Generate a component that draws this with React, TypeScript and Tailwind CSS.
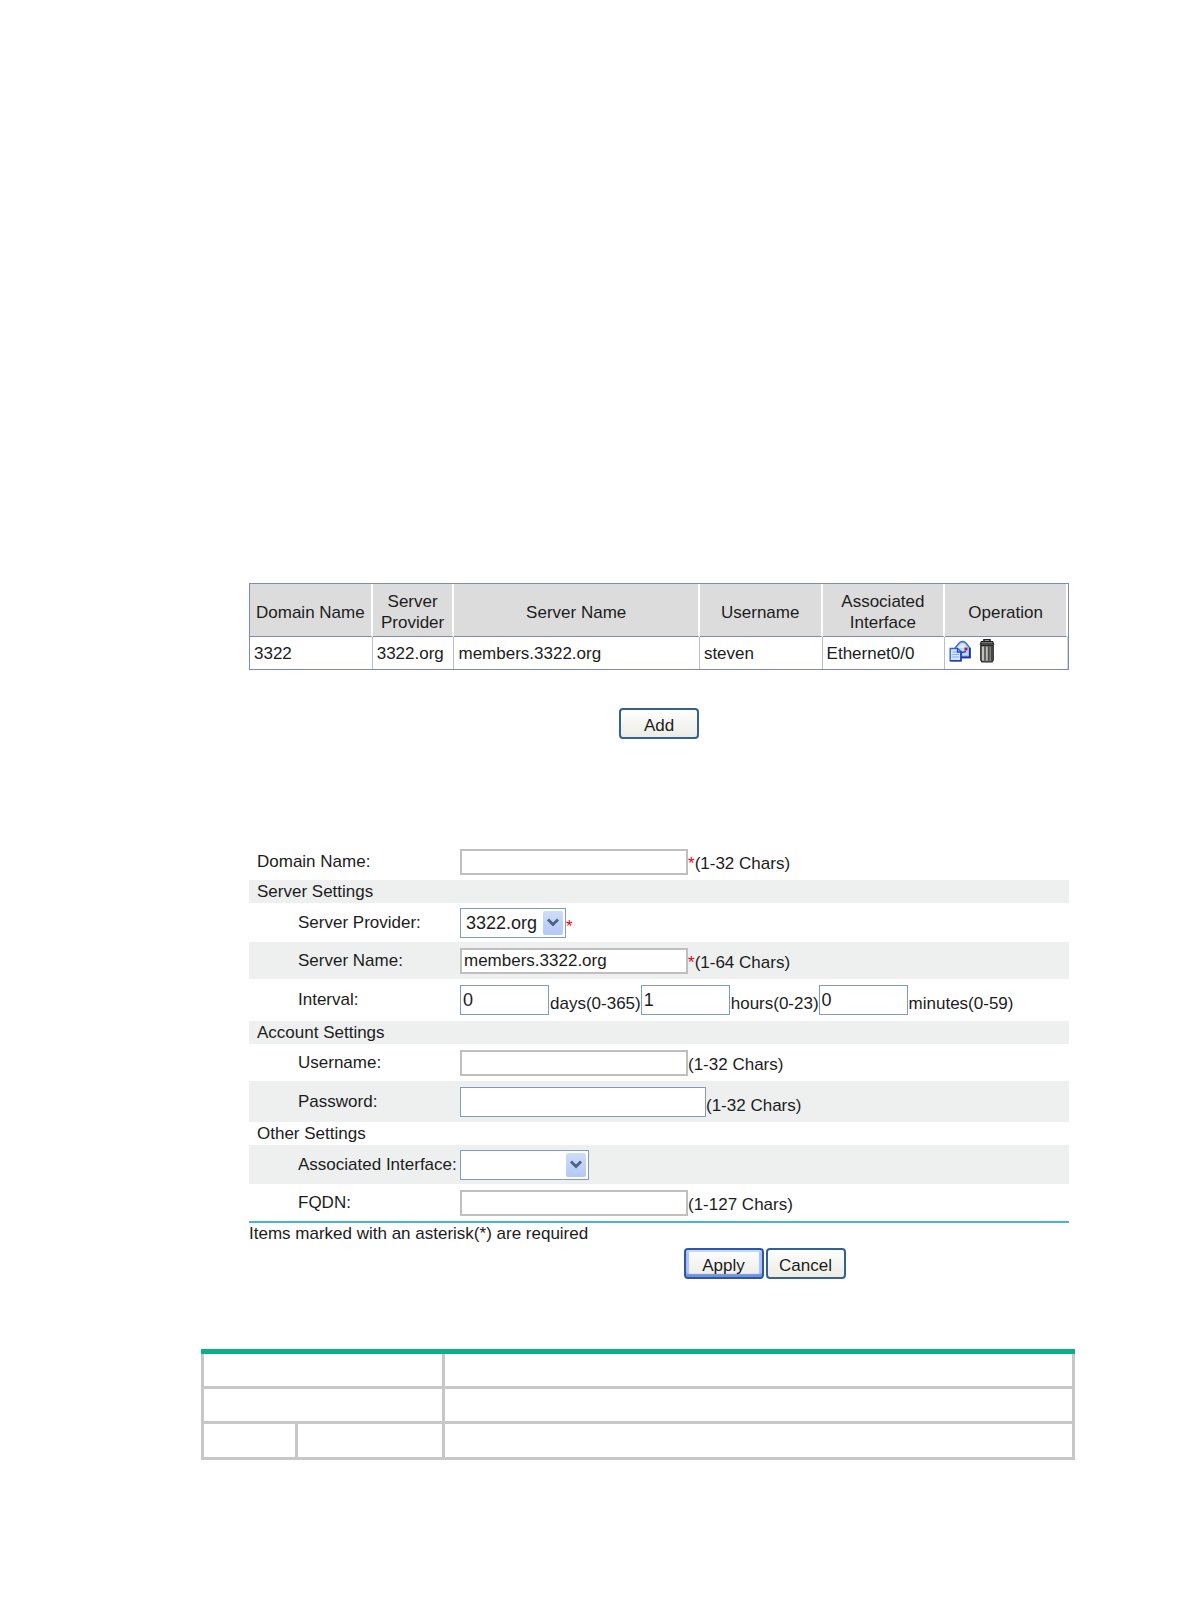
import type { ReactNode } from "react";

const columns = ["Domain Name", "Server Provider", "Server Name", "Username", "Associated Interface", "Operation"];
const record = ["3322", "3322.org", "members.3322.org", "steven", "Ethernet0/0"];

function EditIcon() {
  return (
    <svg viewBox="0 0 22 22" className="size-[22px]" aria-hidden="true">
      <path d="M6 8 L10.5 2.5 Q13.5 0.5 16.5 2.5 L21 8 V17.5 H6 Z" fill="#9fc3f7" stroke="#4668cf" strokeWidth="1.3" />
      <path d="M8 8 L11.5 4 Q13.5 2.5 15.5 4 L19 8 Z" fill="#d8eaff" />
      <path d="M8.5 8 H19.5 V15 H8.5 Z" fill="#bcd8fc" />
      <path d="M8 8.5 L13 12.5 L17 11.5" fill="none" stroke="#2848b8" strokeWidth="1.3" />
      <path d="M12 17.3 H20.8 V8" fill="none" stroke="#1b2f9a" strokeWidth="1.8" />
      <rect x="15.5" y="7.5" width="3" height="3" fill="#b0203c" />
      <path d="M1.2 8.5 H8.5 L12 11.5 V20.7 H1.2 Z" fill="#d2e6ff" stroke="#3c62d0" strokeWidth="1.4" />
      <path d="M3.2 12 H8 M3.2 14.5 H10 M3.2 17 H10" stroke="#86aff0" strokeWidth="1.2" />
      <path d="M12 12 V20.7 H1.5" fill="none" stroke="#2340ac" strokeWidth="1.6" />
      <path d="M8.5 8.5 V12 H12" fill="none" stroke="#2447b5" strokeWidth="1.3" />
    </svg>
  );
}

function TrashIcon() {
  return (
    <svg viewBox="0 0 16 24" className="h-6 w-4" aria-hidden="true">
      <path d="M5 2.2 V0.8 H11 V2.2" fill="none" stroke="#222" strokeWidth="1.6" />
      <path d="M2 2 H14 L15.5 5.8 H0.5 Z" fill="#1d1d1d" />
      <path d="M2.5 3.8 H13.5" stroke="#8c8c88" strokeWidth="1.2" />
      <path d="M1.8 6.5 H14.2 V21 L13 22.8 H3 L1.8 21 Z" fill="#7d7d79" stroke="#262626" strokeWidth="1.3" />
      <path d="M4 7.5 V21.5" stroke="#c9c9c4" strokeWidth="1.8" />
      <path d="M6 7.5 V21.5" stroke="#4a4a48" strokeWidth="1.1" />
      <path d="M7.8 7.5 V21.5" stroke="#c0c0bb" strokeWidth="1.5" />
      <path d="M9.8 7.5 V21.5" stroke="#3a3a38" strokeWidth="1.1" />
      <path d="M12.8 7.5 V21.5" stroke="#3a3a38" strokeWidth="1.3" />
    </svg>
  );
}

function Row({ label, id, size, shaded, top, children }: { label: string; id: string; size: string; shaded?: boolean; top?: boolean; children: ReactNode }) {
  return (
    <div className={`flex items-center ${size} ${shaded ? "bg-[#eef0f0]" : ""}`}>
      <label htmlFor={id} className={`w-[211px] shrink-0 whitespace-nowrap ${top ? "pl-2" : "pl-[49px]"}`}>
        {label}
      </label>
      <div className="flex items-end whitespace-nowrap">{children}</div>
    </div>
  );
}

function Section({ title, shaded }: { title: string; shaded?: boolean }) {
  return <h2 className={`h-[23px] pl-2 leading-6 ${shaded ? "bg-[#eef0f0]" : ""}`}>{title}</h2>;
}

function TextBox({ id, value }: { id: string; value?: string }) {
  return <input id={id} type="text" defaultValue={value} className="h-[26px] w-[228px] border-2 border-[#bfbfbf] bg-white px-0.5 outline-none" />;
}

function NumberBox({ id, value }: { id: string; value: string }) {
  return <input id={id} type="text" defaultValue={value} className="h-[30px] w-[89px] border border-[#7f9db9] bg-white px-0.5 text-lg outline-none" />;
}

function SelectBox({ id, width, options }: { id: string; width: string; options: string[] }) {
  return (
    <div className={`relative ${width}`}>
      <select id={id} className="block h-[30px] w-full appearance-none border border-[#7f9db9] bg-white pl-[5px] text-lg leading-7 outline-none">
        {options.map((option) => (
          <option key={option}>{option}</option>
        ))}
      </select>
      <span className="pointer-events-none absolute inset-y-[3px] right-[3px] flex w-5 items-center justify-center rounded-xs bg-linear-to-b from-[#cfdcfb] to-[#b4c8f6]">
        <svg viewBox="0 0 12 9" className="h-[9px] w-3" aria-hidden="true">
          <path d="M1 1.5 L6 6.5 L11 1.5" fill="none" stroke="#4d6185" strokeWidth="2.8" />
        </svg>
      </span>
    </div>
  );
}

function Button({ children, primary }: { children: string; primary?: boolean }) {
  return (
    <button
      type="button"
      className={`h-[31px] w-20 rounded border-2 bg-linear-to-b from-white to-[#ecebe4] pt-1 leading-5 ${
        primary
          ? "border-[#2f57a0] shadow-[inset_0_2px_1px_#c3d6fb,inset_0_-3px_1px_#6f93e4,inset_3px_0_1px_#a9c3f5,inset_-3px_0_1px_#a9c3f5]"
          : "border-[#33628f]"
      }`}
    >
      {children}
    </button>
  );
}

function Star() {
  return <span className="text-[#f00018]">*</span>;
}

export default function App() {
  return (
    <main className="min-h-screen bg-white pt-[583px] pr-[115px] pb-[156px] pl-[201px] font-['Liberation_Sans',Arial,sans-serif] text-[17px] leading-[22px] text-[#1c1c1c]">
      <div className="mr-1.5 ml-12">
        <table className="w-full table-fixed border-separate border-spacing-0 border border-[#7d88bd]">
          <colgroup>
            <col className="w-[15%]" />
            <col className="w-[10%]" />
            <col className="w-[30%]" />
            <col className="w-[15%]" />
            <col className="w-[15%]" />
            <col className="w-[15%]" />
          </colgroup>
          <thead>
            <tr className="h-[53px] bg-[#dcdcdc]">
              {columns.map((name) => (
                <th key={name} scope="col" className="border-r-2 border-b border-r-white border-b-[#7d88bd] p-0 pt-1 leading-[21px] font-normal">
                  {name}
                </th>
              ))}
            </tr>
          </thead>
          <tbody>
            <tr className="h-8">
              {record.map((text) => (
                <td key={text} className="border-r border-[#b9bcd8] p-0 pt-0.5 pl-1 whitespace-nowrap">
                  {text}
                </td>
              ))}
              <td className="border-r border-[#d4d6e8] p-0 pl-1">
                <div className="flex items-center gap-2 pb-1">
                  <button type="button" aria-label="Edit">
                    <EditIcon />
                  </button>
                  <button type="button" aria-label="Delete">
                    <TrashIcon />
                  </button>
                </div>
              </td>
            </tr>
          </tbody>
        </table>

        <div className="mt-[38px] flex justify-center">
          <Button>Add</Button>
        </div>

        <form className="mt-[104px]">
          <div className="border-b-2 border-[#45b4dc]">
            <Row label="Domain Name:" id="domain" size="h-[37px]" top>
              <TextBox id="domain" />
              <Star />
              <span>(1-32 Chars)</span>
            </Row>
            <Section title="Server Settings" shaded />
            <Row label="Server Provider:" id="provider" size="h-[39px]">
              <SelectBox id="provider" width="w-[106px]" options={["3322.org"]} />
              <Star />
            </Row>
            <Row label="Server Name:" id="server" size="h-[37px]" shaded>
              <TextBox id="server" value="members.3322.org" />
              <Star />
              <span>(1-64 Chars)</span>
            </Row>
            <Row label="Interval:" id="days" size="h-[42px]">
              <NumberBox id="days" value="0" />
              <label htmlFor="days" className="pl-px">days(0-365)</label>
              <NumberBox id="hours" value="1" />
              <label htmlFor="hours" className="pl-px">hours(0-23)</label>
              <NumberBox id="minutes" value="0" />
              <label htmlFor="minutes" className="pl-px">minutes(0-59)</label>
            </Row>
            <Section title="Account Settings" shaded />
            <Row label="Username:" id="username" size="h-[37px]">
              <TextBox id="username" />
              <span>(1-32 Chars)</span>
            </Row>
            <Row label="Password:" id="password" size="h-[41px]" shaded>
              <input id="password" type="password" className="h-[30px] w-[246px] border border-[#7f9db9] bg-white px-0.5 outline-none" />
              <span>(1-32 Chars)</span>
            </Row>
            <Section title="Other Settings" />
            <Row label="Associated Interface:" id="interface" size="h-[39px]" shaded>
              <SelectBox id="interface" width="w-[129px]" options={[""]} />
            </Row>
            <Row label="FQDN:" id="fqdn" size="h-[37px]">
              <TextBox id="fqdn" />
              <span>(1-127 Chars)</span>
            </Row>
          </div>
          <p>Items marked with an asterisk(*) are required</p>
          <div className="mt-[3px] flex justify-center gap-0.5 pl-[211px]">
            <Button primary>Apply</Button>
            <Button>Cancel</Button>
          </div>
        </form>
      </div>

      <div className="mt-[70px] border-t-[5px] border-[#0bb08a]">
        <table className="w-full table-fixed border-separate border-spacing-0 border-l-3 border-[#c7c7c7]">
          <colgroup>
            <col className="w-[94px]" />
            <col className="w-[147px]" />
            <col />
          </colgroup>
          <tbody>
            <tr className="h-[35px]">
              <td colSpan={2} className="border-r-3 border-b-3 border-[#c7c7c7] p-0" />
              <td className="border-r-3 border-b-3 border-[#c7c7c7] p-0" />
            </tr>
            <tr className="h-[35px]">
              <td colSpan={2} className="border-r-3 border-b-3 border-[#c7c7c7] p-0" />
              <td className="border-r-3 border-b-3 border-[#c7c7c7] p-0" />
            </tr>
            <tr className="h-9">
              <td className="border-r-3 border-b-3 border-[#c7c7c7] p-0" />
              <td className="border-r-3 border-b-3 border-[#c7c7c7] p-0" />
              <td className="border-r-3 border-b-3 border-[#c7c7c7] p-0" />
            </tr>
          </tbody>
        </table>
      </div>
    </main>
  );
}
